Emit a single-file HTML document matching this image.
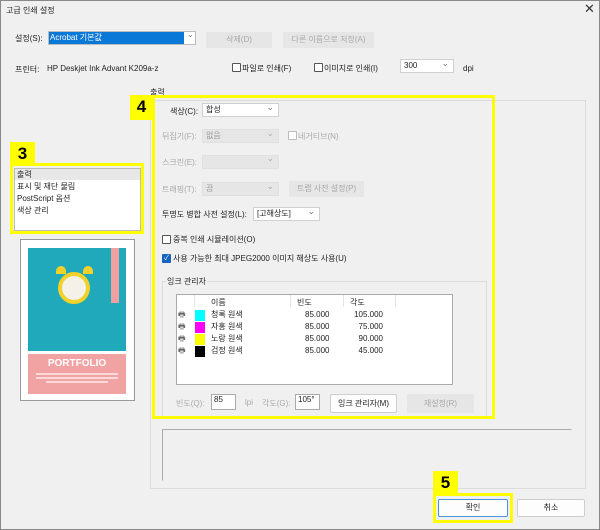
<!DOCTYPE html>
<html><head><meta charset="utf-8"><style>
*{box-sizing:border-box;margin:0;padding:0}
body{width:600px;height:530px;background:#f0f0f0;font-family:"Liberation Sans","Noto Sans CJK KR",sans-serif;font-size:8px;color:#222;position:relative;overflow:hidden}
.a{position:absolute;white-space:nowrap}
.dis{color:#a8a8a8}
.btn{position:absolute;border:1px solid #cfcfcf;background:#fdfdfd;text-align:center;border-radius:2px}
.btnd{position:absolute;background:#e6e6e6;color:#a8a8a8;text-align:center;border:1px solid #e6e6e6}
.combo{position:absolute;background:#fff;border:1px solid #d0d0d0;padding-left:3px}
.combo:after{content:"⌄";position:absolute;right:4px;top:-3px;color:#777;font-size:9px}
.combod{position:absolute;background:#e6e6e6;border:1px solid #e0e0e0;padding-left:3px;color:#999}
.combod:after{content:"⌄";position:absolute;right:4px;top:-3px;color:#aaa;font-size:9px}
.cb{position:absolute;width:9px;height:9px;border:1px solid #555;background:#fff;border-radius:1px}
.yl{position:absolute;border:3px solid #ffff00}
.ylab{position:absolute;background:#ffff00;font-weight:bold;font-size:17px;color:#000;text-align:center;line-height:24px}
</style></head><body>
<div class="a" style="left:0;top:0;width:600px;height:530px;border:1px solid #888"></div>
<div class="a" style="left:6px;top:5px;font-size:8px">고급 인쇄 설정</div>
<div class="a" style="left:584px;top:1px;font-size:13px;color:#333">✕</div>

<div class="a" style="left:15px;top:33px">설정(S):</div>
<div class="a" style="left:48px;top:31px;width:148px;height:14px;background:#fff;border:1px solid #bbb"></div>
<div class="a" style="left:49px;top:32px;width:135px;height:12px;background:#0a78d7;color:#fff;padding-left:1px;line-height:12px">Acrobat 기본값</div>
<div class="a" style="left:187px;top:30px;color:#777">⌄</div>
<div class="btnd" style="left:206px;top:32px;width:66px;height:16px;line-height:14px">삭제(D)</div>
<div class="btnd" style="left:283px;top:32px;width:91px;height:16px;line-height:14px">다른 이름으로 저장(A)</div>

<div class="a" style="left:15px;top:64px">프린터:</div>
<div class="a" style="left:47px;top:64px">HP Deskjet Ink Advant K209a-z</div>
<div class="cb" style="left:232px;top:63px"></div><div class="a" style="left:242px;top:63px">파일로 인쇄(F)</div>
<div class="cb" style="left:314px;top:63px"></div><div class="a" style="left:324px;top:63px">이미지로 인쇄(I)</div>
<div class="combo" style="left:400px;top:59px;width:54px;height:14px;line-height:12px">300</div>
<div class="a" style="left:463px;top:64px">dpi</div>

<div class="a" style="left:150px;top:87px">출력</div>
<div class="a" style="left:150px;top:100px;width:436px;height:389px;border:1px solid #dcdcdc"></div>

<div class="a" style="left:170px;top:106px">색상(C):</div>
<div class="combo" style="left:202px;top:103px;width:77px;height:14px;line-height:12px">합성</div>
<div class="a dis" style="left:162px;top:131px">뒤집기(F):</div>
<div class="combod" style="left:202px;top:129px;width:77px;height:14px;line-height:12px">없음</div>
<div class="cb" style="left:288px;top:131px;border-color:#bbb"></div><div class="a dis" style="left:298px;top:131px">네거티브(N)</div>
<div class="a dis" style="left:162px;top:157px">스크린(E):</div>
<div class="combod" style="left:202px;top:155px;width:77px;height:14px"></div>
<div class="a dis" style="left:162px;top:184px">트래핑(T):</div>
<div class="combod" style="left:202px;top:182px;width:77px;height:14px;line-height:12px">끔</div>
<div class="btnd" style="left:289px;top:181px;width:75px;height:16px;line-height:14px">트랩 사전 설정(P)</div>
<div class="a" style="left:162px;top:209px">투명도 병합 사전 설정(L):</div>
<div class="combo" style="left:253px;top:207px;width:67px;height:14px;line-height:12px">[고해상도]</div>
<div class="cb" style="left:162px;top:235px"></div><div class="a" style="left:173px;top:234px">중복 인쇄 시뮬레이션(O)</div>
<div class="a" style="left:162px;top:254px;width:9px;height:9px;background:#1565c0;border-radius:1px;color:#fff;font-size:7px;line-height:9px;text-align:center">✓</div><div class="a" style="left:173px;top:253px">사용 가능한 최대 JPEG2000 이미지 해상도 사용(U)</div>

<div class="a" style="left:162px;top:281px;width:325px;height:138px;border:1px solid #dcdcdc"></div>
<div class="a" style="left:166px;top:276px;background:#f0f0f0;padding:0 1px">잉크 관리자</div>
<div class="a" style="left:176px;top:294px;width:277px;height:91px;background:#fff;border:1px solid #aaa"></div>
<div class="a" style="left:290px;top:295px;width:1px;height:12px;background:#e5e5e5"></div>
<div class="a" style="left:343px;top:295px;width:1px;height:12px;background:#e5e5e5"></div>
<div class="a" style="left:395px;top:295px;width:1px;height:12px;background:#e5e5e5"></div>
<div class="a" style="left:194px;top:295px;width:1px;height:12px;background:#e5e5e5"></div>
<div class="a" style="left:211px;top:297px">이름</div>
<div class="a" style="left:297px;top:297px">빈도</div>
<div class="a" style="left:350px;top:297px">각도</div>
<div id="rows"></div>
<div class="a" style="left:178px;top:309px;color:#666;font-size:8px;line-height:12px">🖶<br>🖶<br>🖶<br>🖶</div>
<div class="a" style="left:195px;top:310px;width:10px;height:11px;background:#00ffff"></div>
<div class="a" style="left:195px;top:322px;width:10px;height:11px;background:#ff00ff"></div>
<div class="a" style="left:195px;top:334px;width:10px;height:11px;background:#ffff00"></div>
<div class="a" style="left:195px;top:346px;width:10px;height:11px;background:#000"></div>
<div class="a" style="left:211px;top:309px;line-height:12px">청록 원색<br>자홍 원색<br>노랑 원색<br>검정 원색</div>
<div class="a" style="left:305px;top:309px;line-height:12px">85.000<br>85.000<br>85.000<br>85.000</div>
<div class="a" style="left:352px;top:309px;line-height:12px;text-align:right;width:31px">105.000<br>75.000<br>90.000<br>45.000</div>

<div class="a dis" style="left:176px;top:398px">빈도(Q):</div>
<div class="a" style="left:211px;top:394px;width:25px;height:16px;background:#fff;border:1px solid #aaa;padding-left:2px">85</div>
<div class="a dis" style="left:245px;top:398px">lpi</div>
<div class="a dis" style="left:262px;top:398px">각도(G):</div>
<div class="a" style="left:295px;top:394px;width:25px;height:16px;background:#fff;border:1px solid #aaa;padding-left:2px">105°</div>
<div class="btn" style="left:330px;top:394px;width:67px;height:19px;line-height:17px">잉크 관리자(M)</div>
<div class="btnd" style="left:407px;top:394px;width:67px;height:19px;line-height:17px">재설정(R)</div>

<div class="a" style="left:162px;top:429px;width:410px;height:52px;border:1px solid #aaa;border-right-color:#f0f0f0;border-bottom-color:#f0f0f0"></div>

<div class="yl" style="left:152px;top:95px;width:343px;height:324px"></div>
<div class="ylab" style="left:130px;top:95px;width:23px;height:25px">4</div>

<!-- left panel -->
<div class="a" style="left:14px;top:168px;width:127px;height:63px;background:#fff;border:1px solid #bbb"></div>
<div class="a" style="left:15px;top:169px;width:125px;height:11px;background:#e8e8e8"></div>
<div class="a" style="left:17px;top:169px;line-height:12px">출력<br>표시 및 재단 물림<br>PostScript 옵션<br>색상 관리</div>
<div class="yl" style="left:10px;top:163px;width:134px;height:71px"></div>
<div class="ylab" style="left:10px;top:142px;width:25px;height:23px">3</div>

<div class="a" style="left:20px;top:239px;width:115px;height:162px;background:#fff;border:1px solid #999"></div>
<div class="a" style="left:28px;top:248px;width:98px;height:103px;background:#20a9bb"></div>
<div class="a" style="left:111px;top:248px;width:8px;height:55px;background:#f0a0a0"></div>
<div class="a" style="left:58px;top:272px;width:32px;height:32px;border-radius:50%;background:#f5f0e8;border:4px solid #f2d12a"></div>
<div class="a" style="left:56px;top:266px;width:10px;height:8px;border-radius:5px 5px 0 0;background:#f2d12a"></div>
<div class="a" style="left:83px;top:266px;width:10px;height:8px;border-radius:5px 5px 0 0;background:#f2d12a"></div>
<div class="a" style="left:28px;top:354px;width:98px;height:40px;background:#f1a3a3"></div>
<div class="a" style="left:28px;top:358px;width:98px;text-align:center;color:#fff;font-weight:bold;font-size:10px">PORTFOLIO</div>
<div class="a" style="left:36px;top:373px;width:82px;height:2px;background:#fbd9d9"></div>
<div class="a" style="left:36px;top:377px;width:82px;height:2px;background:#fbd9d9"></div>
<div class="a" style="left:46px;top:381px;width:62px;height:2px;background:#fbd9d9"></div>

<!-- bottom buttons -->
<div class="btn" style="left:438px;top:499px;width:70px;height:18px;line-height:16px;border-color:#4a90d9">확인</div>
<div class="btn" style="left:517px;top:499px;width:68px;height:18px;line-height:16px">취소</div>
<div class="yl" style="left:433px;top:493px;width:80px;height:30px"></div>
<div class="ylab" style="left:433px;top:471px;width:25px;height:23px">5</div>
</body></html>
